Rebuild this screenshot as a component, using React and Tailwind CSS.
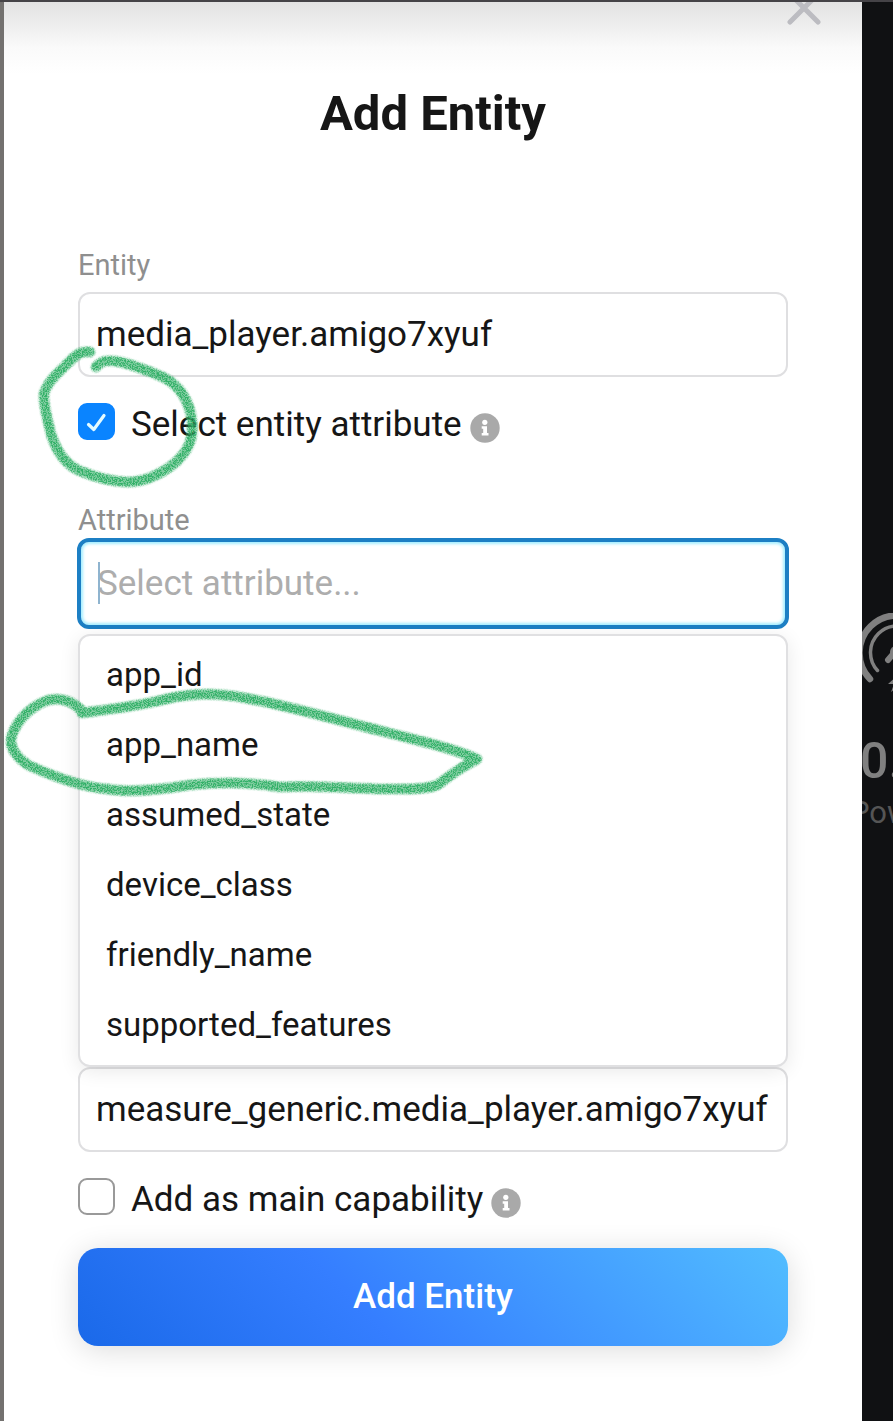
import React from "react";

const attributes = [
  "app_id",
  "app_name",
  "assumed_state",
  "device_class",
  "friendly_name",
  "supported_features",
];

function InfoIcon() {
  return (
    <svg viewBox="0 0 30 30" className="size-[30px] shrink-0" aria-hidden="true">
      <circle cx="15" cy="15" r="14.7" fill="#a9a9a9" />
      <circle cx="14.8" cy="9.3" r="2.6" fill="#fff" />
      <path d="M11.7 13.2H17V20H18.5V22.6H11.7V20H13.2V15.8H11.7Z" fill="#fff" />
    </svg>
  );
}

function CheckRow({ id, label, defaultChecked }) {
  return (
    <div className="flex items-start">
      <span className="grid size-[37px] shrink-0">
        <input
          id={id}
          type="checkbox"
          defaultChecked={defaultChecked}
          className="peer col-start-1 row-start-1 size-[37px] appearance-none rounded-[9px] border-2 border-[#999] bg-white checked:border-[#0a84ff] checked:bg-[#0a84ff]"
        />
        <svg
          viewBox="0 0 37 37"
          className="pointer-events-none invisible col-start-1 row-start-1 size-[37px] peer-checked:visible"
          fill="none"
          stroke="#e4fbff"
          strokeWidth="3.2"
          strokeLinecap="round"
          strokeLinejoin="round"
          aria-hidden="true"
        >
          <path d="M10.500 21.500L15.800 26.500L26 12.500" />
        </svg>
      </span>
      <label htmlFor={id} className="ml-4 text-[35px] leading-[44px] whitespace-nowrap">
        {label}
      </label>
      <span className="mt-2.5 ml-2">
        <InfoIcon />
      </span>
    </div>
  );
}

function BackgroundTile() {
  return (
    <aside className="w-[31px] shrink-0 overflow-hidden bg-[#101113] pt-[611px] text-[#808080]">
      <svg
        viewBox="0 0 80 84"
        className="h-[84px] w-20 max-w-none"
        fill="none"
        stroke="currentColor"
        strokeLinecap="round"
        aria-hidden="true"
      >
        <path d="M8 66A37.500 37.500 0 1 1 62 66" strokeWidth="6.500" />
        <path d="M15.500 57.500A26.500 26.500 0 1 1 54.500 57.500" strokeWidth="3.500" />
        <path d="M26 47L38 33" strokeWidth="6" />
        <circle cx="34" cy="39" r="6" fill="currentColor" stroke="none" />
        <path d="M36 62L26 71H32L29 79L42 69H35Z" fill="currentColor" stroke="none" />
      </svg>
      <p className="-ml-0.5 mt-[38px] text-[50px] leading-[52px] font-medium">0.</p>
      <p className="-ml-3 mt-2 text-[31px] leading-9 text-[#555]">Power</p>
    </aside>
  );
}

function Scribbles() {
  return (
    <svg
      width="500"
      height="820"
      viewBox="0 0 500 820"
      className="pointer-events-none absolute top-0 left-0 z-20"
      fill="none"
      stroke="#33b068"
      strokeLinecap="round"
      strokeLinejoin="round"
      aria-hidden="true"
    >
      <filter
        id="crayon"
        x="0"
        y="0"
        width="500"
        height="820"
        filterUnits="userSpaceOnUse"
        colorInterpolationFilters="sRGB"
      >
        <feGaussianBlur in="SourceGraphic" stdDeviation="1.1" result="soft" />
        <feTurbulence type="fractalNoise" baseFrequency="0.8" numOctaves="2" seed="4" />
        <feColorMatrix values="0 0 0 0 0  0 0 0 0 0  0 0 0 0 0  0 0 0 5 -2" result="grain" />
        <feComposite in="soft" in2="grain" operator="in" result="speckle" />
        <feComponentTransfer in="soft" result="base">
          <feFuncA type="linear" slope="0.62" />
        </feComponentTransfer>
        <feMerge>
          <feMergeNode in="base" />
          <feMergeNode in="speckle" />
        </feMerge>
      </filter>
      <g filter="url(#crayon)" strokeWidth="9.500">
        <path d="M90 352C80 350 74 357 67 364C58 373 47 382 44 394C43 406 48 420 51 434C56 450 64 464 80 471C95 477 112 482 128 482C145 482 161 474 175 463C187 452 194 440 192 422C190 402 180 386 163 377C146 370 127 362 113 361C106 360 100 362 96 367" />
        <path d="M82 713C112 709 140 706 166 699C192 693 222 693 250 699C293 707 340 721 389 733C424 742 455 749 477 759C464 766 450 775 439 784C430 790 405 789 386 789C345 788 306 785 280 787C250 782 215 782 190 785C165 789 130 793 107 789C81 787 50 775 28 765C16 757 8 746 12 735C18 718 33 705 49 700C64 697 75 703 83 712" />
      </g>
    </svg>
  );
}

const fieldClass =
  "block h-[85px] w-full rounded-xl border-2 border-[#dfdfe1] bg-white px-4 text-[35px] text-[#161616] outline-none";

export default function App() {
  return (
    <div className="relative flex min-h-screen flex-col overflow-hidden bg-white font-[Roboto,sans-serif] text-[#161616]">
      <div className="h-0.5 shrink-0 bg-[#454347]" />
      <div className="flex flex-1">
        <div className="w-1 shrink-0 bg-[#73716f]" />
        <main className="min-w-0 flex-1 bg-linear-to-b from-[#e2e2e2] via-[#fafafa] via-[46px] to-white to-[72px]">
          <div className="flex h-6 items-end justify-end overflow-hidden pr-10">
            <button type="button" aria-label="Close" className="h-9 w-[36px]">
              <svg
                viewBox="0 0 36 36"
                className="size-9"
                fill="none"
                stroke="#bcbcc1"
                strokeWidth="5"
                strokeLinecap="round"
                aria-hidden="true"
              >
                <path d="M4 4L32 32M32 4L4 32" />
              </svg>
            </button>
          </div>
          <form className="px-[74px] pt-[60px] pb-[75px]" onSubmit={(e) => e.preventDefault()}>
            <h1 className="text-center text-[49px] leading-[56px] font-bold">Add Entity</h1>

            <label htmlFor="entity" className="mt-[105px] block text-[29px] leading-9 text-[#8f8f8f]">
              Entity
            </label>
            <input id="entity" defaultValue="media_player.amigo7xyuf" className={`mt-[9px] ${fieldClass}`} />

            <div className="mt-[26px]">
              <CheckRow id="use-attribute" label="Select entity attribute" defaultChecked />
            </div>

            <label htmlFor="attribute" className="mt-[55px] block text-[29px] leading-9 text-[#8f8f8f]">
              Attribute
            </label>
            <div className="relative -mx-px">
              <input
                id="attribute"
                placeholder="Select attribute..."
                className="block h-[91px] w-full rounded-xl border-4 border-[#1c7fc4] bg-white px-4 text-[35px] shadow-[inset_0_0_3px_2px_#a5eeff] outline-none placeholder:text-[#adadad]"
              />
              <span className="absolute top-6 left-[21px] h-[42px] w-0.5 bg-[#8fb4cf]" />
            </div>

            <ul
              aria-label="Attributes"
              className="relative z-10 mt-[5px] rounded-xl border-2 border-[#e0e0e2] bg-white pt-1 pb-[5px] shadow-[0_4px_20px_rgba(0,0,0,0.09)]"
            >
              {attributes.map((name) => (
                <li key={name}>
                  <button type="button" className="block h-[70px] w-full px-[26px] text-left text-[33px]">
                    {name}
                  </button>
                </li>
              ))}
            </ul>

            <input
              aria-label="Capability"
              defaultValue="measure_generic.media_player.amigo7xyuf"
              className={fieldClass}
            />

            <div className="mt-[26px]">
              <CheckRow id="main-capability" label="Add as main capability" />
            </div>

            <button
              type="submit"
              className="mt-[26px] block h-[98px] w-full rounded-[20px] bg-linear-[45deg] from-[#1a69e9] via-[#357eff] via-40% to-[#52bdff] text-[35px] font-medium text-white shadow-[0_4px_30px_rgba(0,0,0,0.14)]"
            >
              Add Entity
            </button>
          </form>
        </main>
        <BackgroundTile />
      </div>
      <Scribbles />
    </div>
  );
}
